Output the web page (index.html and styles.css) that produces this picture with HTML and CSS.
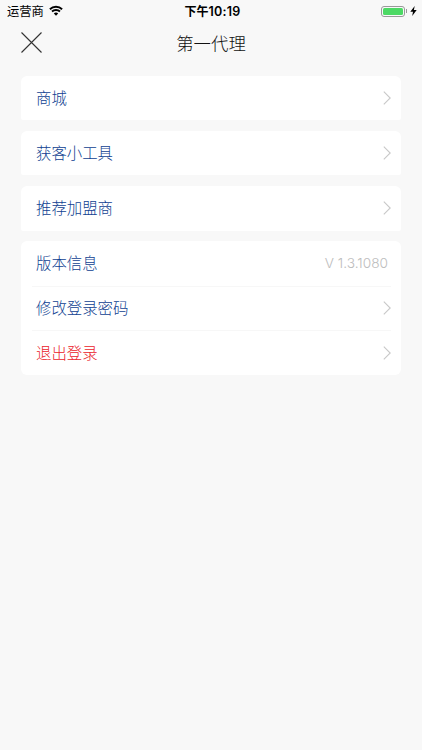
FILE: index.html
```html
<!DOCTYPE html>
<html lang="zh-CN">
<head>
  <meta charset="UTF-8" />
  <meta name="viewport" content="width=device-width, initial-scale=1.0" />
  <title>第一代理</title>
  <link rel="stylesheet" href="styles.css">
</head>
<body>
  <div class="status-bar">
    <div class="carrier">
      <span>运营商</span>
      <svg class="wifi" viewBox="0 0 14 11" width="14" height="11">
        <path d="M0.9 4.2C4.3 0.9 9.7 0.9 13.1 4.2M3 6.5C5.2 4.4 8.8 4.4 11 6.5" fill="none" stroke="#000" stroke-width="1.9" />
        <path d="M4.8 8.5C6 7.3 8 7.3 9.2 8.5L7 10.8Z" />
      </svg>
    </div>
    <div class="time">下午<span class="digits">10:19</span></div>
    <div class="power">
      <div class="battery"><div class="level"></div></div>
      <div class="battery-tip"></div>
      <svg class="bolt" viewBox="0 0 7 10" width="7" height="10">
        <path d="M4.7 0L0.3 5.7H3L2.2 10L6.7 4.1H3.9Z" />
      </svg>
    </div>
  </div>

  <header class="nav">
    <button class="close" aria-label="关闭">
      <svg viewBox="0 0 22 22" width="22" height="22"><path d="M0.5 0.5L20.5 20.5M20.5 0.5L0.5 20.5" /></svg>
    </button>
    <h1 class="title">第一代理</h1>
  </header>

  <main class="menu">
    <div class="card">
      <div class="row">
        <span class="label">商城</span>
        <svg class="arrow" viewBox="0 0 8 14" width="8" height="14"><path d="M0.8 0.6L7.2 7L0.8 13.4" /></svg>
      </div>
    </div>
    <div class="card">
      <div class="row">
        <span class="label">获客小工具</span>
        <svg class="arrow" viewBox="0 0 8 14" width="8" height="14"><path d="M0.8 0.6L7.2 7L0.8 13.4" /></svg>
      </div>
    </div>
    <div class="card">
      <div class="row">
        <span class="label">推荐加盟商</span>
        <svg class="arrow" viewBox="0 0 8 14" width="8" height="14"><path d="M0.8 0.6L7.2 7L0.8 13.4" /></svg>
      </div>
    </div>
    <div class="card group">
      <div class="row">
        <span class="label">版本信息</span>
        <span class="version">V 1.3.1080</span>
      </div>
      <div class="row">
        <span class="label">修改登录密码</span>
        <svg class="arrow" viewBox="0 0 8 14" width="8" height="14"><path d="M0.8 0.6L7.2 7L0.8 13.4" /></svg>
      </div>
      <div class="row logout">
        <span class="label">退出登录</span>
        <svg class="arrow" viewBox="0 0 8 14" width="8" height="14"><path d="M0.8 0.6L7.2 7L0.8 13.4" /></svg>
      </div>
    </div>
  </main>
</body>
</html>
```
FILE: styles.css
```css
:root {
  --bg: #f8f8f8;
  --link: #0f3f91;
  --danger: #ea2229;
  --muted: #bdbdbd;
  --line: #f7f7f7;
}

* {
  box-sizing: border-box;
}

body {
  margin: 0;
  min-height: 100vh;
  background: var(--bg);
  font-family: Inter, "Noto Sans CJK SC", sans-serif;
}

.status-bar {
  display: grid;
  grid-template-columns: 1fr auto 1fr;
  align-items: center;
  height: 22px;
  padding: 0 5px 0 7px;
  font-size: 12px;
  line-height: 22px;
  color: #000;
}

.carrier {
  display: flex;
  align-items: center;
  gap: 5px;
}

.carrier span {
  padding-top: 1px;
  font-size: 12.3px;
  line-height: 21px;
}

.wifi {
  margin-top: -1px;
}

.time {
  padding: 1px 0 0 1px;
  font-weight: 600;
  line-height: 21px;
}

.digits {
  font-size: 12.5px;
  letter-spacing: 0.2px;
}

.power {
  display: flex;
  align-items: center;
  justify-content: flex-end;
}

.battery {
  width: 24px;
  height: 11px;
  padding: 1px;
  border: 1px solid #999;
  border-radius: 3px;
}

.level {
  height: 100%;
  border-radius: 1.5px;
  background: #4cd964;
}

.battery-tip {
  width: 1px;
  height: 4px;
  margin: 0 3px 0 1px;
  background: #999;
}

.nav {
  display: grid;
  grid-template-columns: 1fr auto 1fr;
  align-items: center;
  height: 42px;
  padding: 0 21px;
}

.close {
  display: block;
  width: 22px;
  height: 22px;
  padding: 0;
  border: none;
  background: none;
}

.close svg {
  display: block;
}

.close path {
  fill: none;
  stroke: #333;
  stroke-width: 1.1;
}

.title {
  margin: 0;
  padding-top: 2px;
  font-size: 17.4px;
  font-weight: 300;
  line-height: 40px;
  color: #111;
}

.menu {
  display: flex;
  flex-direction: column;
  gap: 10.4px;
  padding: 11.7px 21px 0;
}

.card {
  padding: 0 10px 0 11px;
  border-radius: 6px 6px 2px 2px;
  background: #fff;
}

.group {
  border-radius: 6px;
}

.row {
  display: flex;
  align-items: center;
  justify-content: space-between;
  height: 44.7px;
  padding-left: 4px;
  font-size: 15.4px;
  font-weight: 300;
  color: var(--link);
}

.row + .row {
  border-top: 1px solid var(--line);
}

.label {
  padding-bottom: 3px;
}

.version {
  padding-right: 3px;
  font-size: 13.7px;
  color: var(--muted);
}

.logout {
  color: var(--danger);
}

.arrow path {
  fill: none;
  stroke: #c8c8c8;
  stroke-width: 1.1;
}
```
